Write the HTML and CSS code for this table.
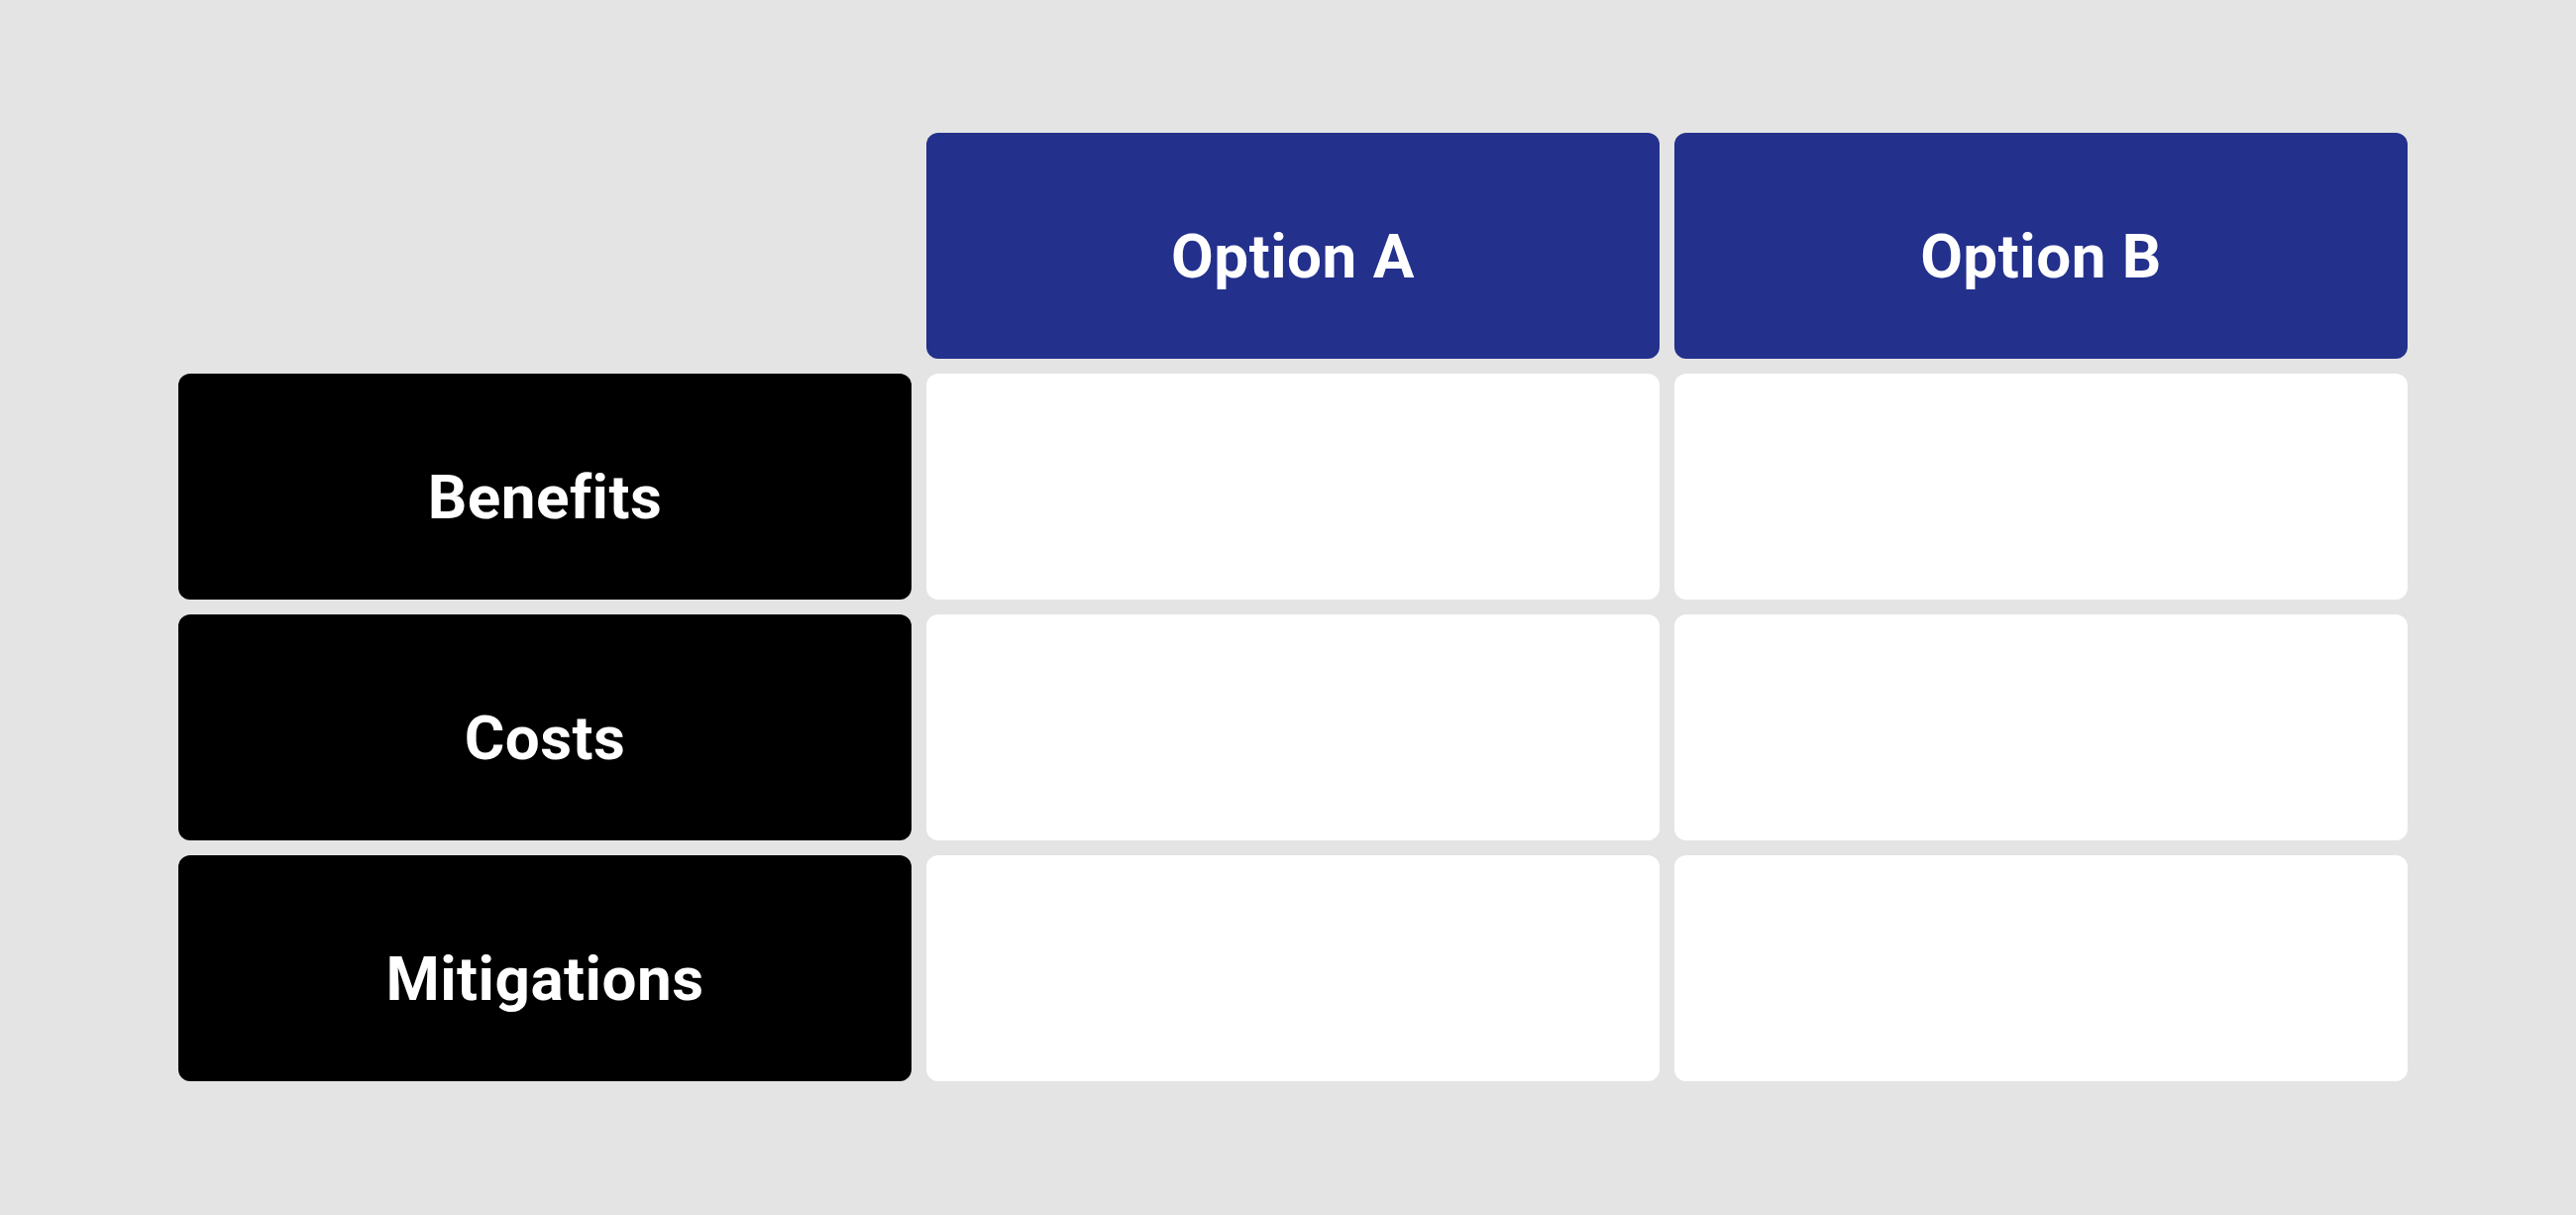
FILE: index.html
```html
<!DOCTYPE html>
<html lang="en">
<head>
<meta charset="utf-8">
<title>Options comparison</title>
<link rel="stylesheet" href="styles.css">
</head>
<body>
<main class="matrix">
  <div class="cell blank"></div>
  <div class="cell head">Option A</div>
  <div class="cell head">Option B</div>

  <div class="cell label">Benefits</div>
  <div class="cell empty"></div>
  <div class="cell empty"></div>

  <div class="cell label">Costs</div>
  <div class="cell empty"></div>
  <div class="cell empty"></div>

  <div class="cell label">Mitigations</div>
  <div class="cell empty"></div>
  <div class="cell empty"></div>
</main>
</body>
</html>
```
FILE: styles.css
```css
html, body {
  margin: 0;
  padding: 0;
  background: #e4e4e4;
  width: 2600px;
  height: 1226px;
  overflow: hidden;
}

.matrix {
  display: grid;
  grid-template-columns: 740px 740px 740px;
  grid-template-rows: 228px 228px 228px 228px;
  column-gap: 15px;
  row-gap: 15px;
  padding: 134px 0 0 180px;
  font-family: Roboto, "Liberation Sans", sans-serif;
  font-weight: 700;
  font-size: 62px;
  letter-spacing: 0.5px;
  color: #ffffff;
}

.cell {
  box-sizing: border-box;
  border-radius: 12px;
  display: flex;
  align-items: center;
  justify-content: center;
  line-height: 1;
  padding-top: 22px;
}

.blank {
  background: transparent;
}

.head {
  background: #23308c;
}

.label {
  background: #000000;
}

.empty {
  background: #ffffff;
}
```
